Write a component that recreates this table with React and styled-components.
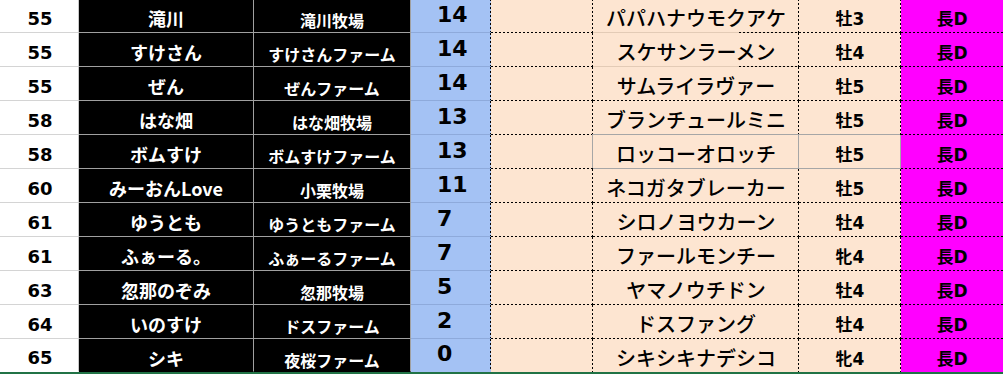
import React from 'react';
import styled, { createGlobalStyle, css } from 'styled-components';

const GlobalStyle = createGlobalStyle`
  html, body {
    margin: 0;
    padding: 0;
    background: #ffffff;
    overflow: hidden;
  }
`;

const PEACH = '#fde5d1';
const BLUE = '#a4c2f4';
const MAGENTA = '#ff00ff';
const BOX = '#a6a6a6';

const dashed = (dir, color) =>
  `repeating-linear-gradient(${dir}, ${color} 0 2px, transparent 2px 4px)`;
const solid = (color) => `linear-gradient(${color}, ${color})`;

const Sheet = styled.div`
  margin-top: -1px;
  width: 1003px;
`;

const Row = styled.div`
  display: grid;
  grid-template-columns: 79px 175px 157px 80px 102px 206px 102px 102px;
  height: 34px;
  box-sizing: border-box;

  ${p => p.$last && css`
    height: 35px;
    border-bottom: 2px solid #217346;
    & > * { --bottom: transparent; }
  `}
`;

const Cell = styled.div`
  box-sizing: border-box;
  display: flex;
  align-items: center;
  justify-content: center;
  padding-bottom: 1px;
  white-space: nowrap;
  overflow: hidden;
  line-height: 1;
`;

const RankCell = styled(Cell)`
  background: #ffffff;
  border-right: 1px solid #c8c8c8;
  border-bottom: 1px solid var(--bottom, #d4d4d4);
  padding-top: 7px;
  padding-left: 2px;
  font-family: "DejaVu Sans", "Noto Sans CJK JP", sans-serif;
  font-weight: 700;
  font-size: 18px;
  color: #000;
`;

const OwnerCell = styled(Cell)`
  background: #000;
  border-right: 1px solid #a0a0a0;
  border-bottom: 1px solid var(--bottom, #a0a0a0);
  padding-top: 6px;
  font-family: "Noto Sans CJK JP", "DejaVu Sans", sans-serif;
  font-weight: 700;
  font-size: 18px;
  color: #fff;
`;

const FarmCell = styled(OwnerCell)`
  padding-top: 10px;
  font-size: 16px;
`;

const ScoreCell = styled(Cell)`
  justify-content: flex-start;
  padding-left: 26px;
  padding-bottom: 2px;
  background:
    ${dashed('to bottom', '#000')} right top / 1px 100% no-repeat,
    ${BLUE};
  border-bottom: 1px solid var(--bottom, #8eaadb);
  font-family: "DejaVu Sans", sans-serif;
  font-weight: 700;
  font-size: 22px;
  color: #000;
`;

const sheetLines = ({ $bg, $boxed, $faint, $noRight }) => {
  const bottom = $boxed
    ? `${solid(BOX)} left bottom / 100% 1px no-repeat`
    : $faint
      ? `${dashed('to right', 'var(--bottom, #000)')} right bottom / 60px 1px no-repeat,
         ${solid('#e3cbb6')} left bottom / 100% 1px no-repeat`
      : `${dashed('to right', 'var(--bottom, #000)')} left bottom / 100% 1px no-repeat`;
  const right = $noRight
    ? ''
    : $boxed
      ? `${solid(BOX)} right top / 1px 100% no-repeat,`
      : `${dashed('to bottom', '#000')} right top / 1px 100% no-repeat,`;
  return css`
    background: ${right} ${bottom}, ${$bg};
    ${$boxed && `box-shadow: -1px -1px 0 ${BOX};`}
  `;
};

const BlankCell = styled(Cell)`
  ${p => sheetLines({ ...p, $bg: PEACH })}
`;

const HorseCell = styled(Cell)`
  ${p => sheetLines({ ...p, $bg: PEACH })}
  padding-top: 5px;
  font-family: "Noto Sans CJK JP", sans-serif;
  font-weight: 500;
  font-size: 20px;
  color: #000;
`;

const SexCell = styled(Cell)`
  ${p => sheetLines({ ...p, $bg: PEACH })}
  padding-top: 8px;
  font-family: "DejaVu Sans", "Noto Sans CJK JP", sans-serif;
  font-weight: 700;
  font-size: 17px;
  color: #000;
`;

const DistCell = styled(SexCell)`
  ${p => sheetLines({ ...p, $bg: MAGENTA, $noRight: true })}
`;

const entries = [
  ['55', '滝川', '滝川牧場', '14', 'パパハナウモクアケ', '牡3'],
  ['55', 'すけさん', 'すけさんファーム', '14', 'スケサンラーメン', '牡4'],
  ['55', 'ぜん', 'ぜんファーム', '14', 'サムライラヴァー', '牡5'],
  ['58', 'はな畑', 'はな畑牧場', '13', 'ブランチュールミニ', '牡5'],
  ['58', 'ボムすけ', 'ボムすけファーム', '13', 'ロッコーオロッチ', '牡5'],
  ['60', 'みーおんLove', '小栗牧場', '11', 'ネコガタブレーカー', '牡5'],
  ['61', 'ゆうとも', 'ゆうともファーム', '7', 'シロノヨウカーン', '牡4'],
  ['61', 'ふぁーる。', 'ふぁーるファーム', '7', 'ファールモンチー', '牝4'],
  ['63', '忽那のぞみ', '忽那牧場', '5', 'ヤマノウチドン', '牡4'],
  ['64', 'いのすけ', 'ドスファーム', '2', 'ドスファング', '牡4'],
  ['65', 'シキ', '夜桜ファーム', '0', 'シキシキナデシコ', '牝4'],
];

const App = () => {
  return (
    <>
      <GlobalStyle />
      <Sheet>
        {entries.map((e, i) => (
          <Row key={i} $last={i === entries.length - 1}>
            <RankCell>{e[0]}</RankCell>
            <OwnerCell>{e[1]}</OwnerCell>
            <FarmCell>{e[2]}</FarmCell>
            <ScoreCell>{e[3]}</ScoreCell>
            <BlankCell />
            <HorseCell $faint={i < 2} $boxed={i === 4}>{e[4]}</HorseCell>
            <SexCell $boxed={i === 4}>{e[5]}</SexCell>
            <DistCell>長D</DistCell>
          </Row>
        ))}
      </Sheet>
    </>
  );
};

export default App;
